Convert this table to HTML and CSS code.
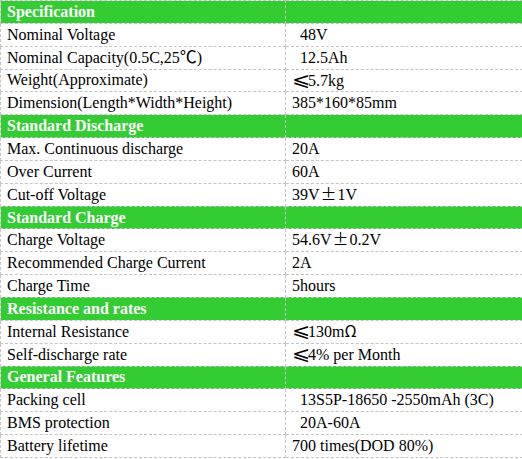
FILE: index.html
```html
<!DOCTYPE html>
<html lang="en">

<head>
    <meta charset="UTF-8">
    <meta name="viewport" content="width=device-width, initial-scale=1.0">
    <title>Battery Specification</title>

    <link rel="stylesheet" href="styles.css">
</head>

<body>
<table class="spec-table">
    <colgroup>
        <col class="col-name">
        <col class="col-value">
    </colgroup>
    <tr class="section">
        <td>Specification</td>
        <td></td>
    </tr>
    <tr>
        <td>Nominal Voltage</td>
        <td>&nbsp;&nbsp;48V</td>
    </tr>
    <tr>
        <td>Nominal Capacity(0.5C,25<span class="sym deg">℃</span>)</td>
        <td>&nbsp;&nbsp;12.5Ah</td>
    </tr>
    <tr>
        <td>Weight(Approximate)</td>
        <td><span class="le">⩽</span>5.7kg</td>
    </tr>
    <tr>
        <td>Dimension(Length*Width*Height)</td>
        <td>385*160*85mm</td>
    </tr>
    <tr class="section">
        <td>Standard Discharge</td>
        <td></td>
    </tr>
    <tr>
        <td>Max. Continuous discharge</td>
        <td>20A</td>
    </tr>
    <tr>
        <td>Over Current</td>
        <td>60A</td>
    </tr>
    <tr>
        <td>Cut-off Voltage</td>
        <td>39V<span class="sym pm">±</span>1V</td>
    </tr>
    <tr class="section">
        <td>Standard Charge</td>
        <td></td>
    </tr>
    <tr>
        <td>Charge Voltage</td>
        <td>54.6V<span class="sym pm">±</span>0.2V</td>
    </tr>
    <tr>
        <td>Recommended Charge Current</td>
        <td>2A</td>
    </tr>
    <tr>
        <td>Charge Time</td>
        <td>5hours</td>
    </tr>
    <tr class="section">
        <td>Resistance and rates</td>
        <td></td>
    </tr>
    <tr>
        <td>Internal Resistance</td>
        <td><span class="le">⩽</span>130m<span class="sym">Ω</span></td>
    </tr>
    <tr>
        <td>Self-discharge rate</td>
        <td><span class="le">⩽</span>4% per Month</td>
    </tr>
    <tr class="section">
        <td>General Features</td>
        <td></td>
    </tr>
    <tr>
        <td>Packing&nbsp;cell</td>
        <td>&nbsp;&nbsp;13S5P-18650 -2550mAh (3C)</td>
    </tr>
    <tr>
        <td>BMS protection</td>
        <td>&nbsp;&nbsp;20A-60A</td>
    </tr>
    <tr>
        <td>Battery lifetime</td>
        <td>700 times(DOD 80%)</td>
    </tr>
</table>
</body>

</html>
```

FILE: styles.css
```css
body {
    margin: 0;
    overflow: hidden;
    background-color: #fff;
}

.spec-table {
    width: 523px;
    border-collapse: collapse;
    table-layout: fixed;
    font-family: "Liberation Serif", "Times New Roman", serif;
    font-size: 16px;
    color: #000;
}

.spec-table .col-name {
    width: 285px;
}

.spec-table td {
    height: 22.85px;
    padding: 0 6px;
    border: 1px dashed #c4c4c4;
    box-sizing: border-box;
    white-space: nowrap;
    vertical-align: middle;
    line-height: 20px;
}

.spec-table .section td {
    background-color: #33cc33;
    color: #fff;
    font-weight: bold;
}

.sym {
    font-family: "Noto Sans CJK SC", "DejaVu Sans", sans-serif;
    font-size: 16px;
    line-height: 1;
}

.deg {
    font-size: 17px;
}

.pm {
    padding: 0 1px;
}

.le {
    display: inline-block;
    width: 16px;
    font-family: "DejaVu Sans", sans-serif;
    font-size: 19px;
    line-height: 1;
    transform: scaleX(1.15);
    transform-origin: left center;
}
```
